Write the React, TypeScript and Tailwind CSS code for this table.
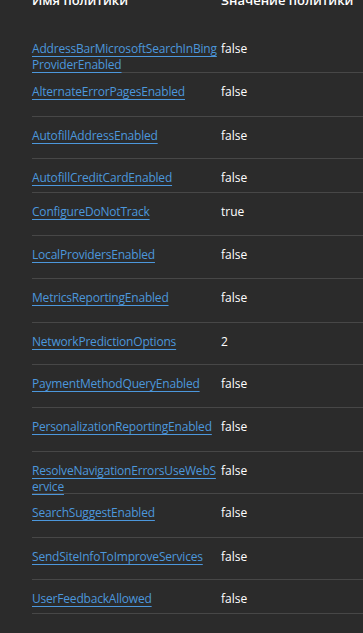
type Policy = {
  name: string[];
  value: string;
  h: string;
};

const policies: Policy[] = [
  { name: ["AddressBarMicrosoftSearchInBing", "ProviderEnabled"], value: "false", h: "h-[43px]" },
  { name: ["AlternateErrorPagesEnabled"], value: "false", h: "h-[44px]" },
  { name: ["AutofillAddressEnabled"], value: "false", h: "h-[42px]" },
  { name: ["AutofillCreditCardEnabled"], value: "false", h: "h-[34px]" },
  { name: ["ConfigureDoNotTrack"], value: "true", h: "h-[43px]" },
  { name: ["LocalProvidersEnabled"], value: "false", h: "h-[43px]" },
  { name: ["MetricsReportingEnabled"], value: "false", h: "h-[44px]" },
  { name: ["NetworkPredictionOptions"], value: "2", h: "h-[42px]" },
  { name: ["PaymentMethodQueryEnabled"], value: "false", h: "h-[43px]" },
  { name: ["PersonalizationReportingEnabled"], value: "false", h: "h-[44px]" },
  { name: ["ResolveNavigationErrorsUseWebS", "ervice"], value: "false", h: "h-[42px]" },
  { name: ["SearchSuggestEnabled"], value: "false", h: "h-[44px]" },
  { name: ["SendSiteInfoToImproveServices"], value: "false", h: "h-[42px]" },
  { name: ["UserFeedbackAllowed"], value: "false", h: "h-[34px]" },
];

export default function App() {
  return (
    <div className="w-full min-h-[633px] bg-[#2b2b2b] pl-8 overflow-hidden font-['Open_Sans',sans-serif]">
      <div className="grid grid-cols-[189px_1fr] h-[30px] text-[13px] font-semibold text-white leading-5 whitespace-nowrap -mt-[10px]">
        <span>Имя политики</span>
        <span>Значение политики</span>
      </div>
      <div className="mt-[10px]">
        {policies.map((p) => (
          <div key={p.name.join("")} className={`grid grid-cols-[189px_1fr] border-b border-[#474747] pt-[11px] text-[12px] leading-4 ${p.h}`}>
            <a href="#" className="text-[#4c97dc] tracking-[-0.2px]">
              {p.name.map((line) => (
                <span key={line} className="block w-fit underline underline-offset-[3px] decoration-[#4c97dc]">{line}</span>
              ))}
            </a>
            <span className="text-white">{p.value}</span>
          </div>
        ))}
      </div>
    </div>
  );
}
